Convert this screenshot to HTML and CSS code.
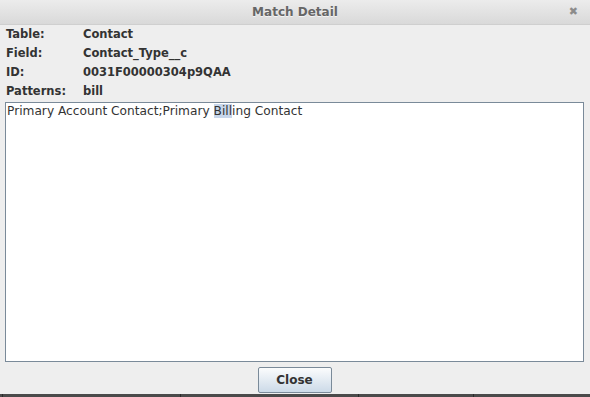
FILE: index.html
```html
<!DOCTYPE html>
<html lang="en">
<head>
  <meta charset="UTF-8" />
  <title>Match Detail</title>
  <link rel="stylesheet" href="styles.css">
</head>
<body>

  <div class="window">
    <div class="titlebar">
      <span class="title">Match Detail</span>
      <span class="close-x">&#x2716;</span>
    </div>

    <div class="fields">
      <div class="row"><span class="label">Table:</span><span class="value">Contact</span></div>
      <div class="row"><span class="label">Field:</span><span class="value">Contact_Type__c</span></div>
      <div class="row"><span class="label">ID:</span><span class="value">0031F00000304p9QAA</span></div>
      <div class="row"><span class="label">Patterns:</span><span class="value">bill</span></div>
    </div>

    <div class="textbox">Primary Account Contact;Primary <span class="hit">Bill</span>ing Contact</div>

    <div class="buttons">
      <button class="btn">Close</button>
    </div>
  </div>

  <div class="taskbar">
    <span class="seg seg1"></span>
    <span class="seg seg2"></span>
    <span class="seg seg3"></span>
    <span class="seg seg4"></span>
  </div>

</body>
</html>
```

FILE: styles.css
```css
body {
  margin: 0;
  width: 590px;
  height: 397px;
  overflow: hidden;
  background: #eeeeee;
  font-family: 'DejaVu Sans', sans-serif;
  font-size: 12px;
  color: #333;
}

.window {
  height: 394px;
  display: flex;
  flex-direction: column;
}

.titlebar {
  height: 24px;
  border-bottom: 1px solid #cfcfcf;
  background: linear-gradient(to bottom, #ececec, #d9d9d9);
  display: flex;
  align-items: center;
  justify-content: center;
  position: relative;
}

.title {
  font-weight: bold;
  color: #666;
  text-shadow: 0 1px 0 #f4f4f4;
}

.close-x {
  position: absolute;
  right: 12px;
  top: 5px;
  font-size: 11px;
  color: #8c8c8c;
}

.fields {
  padding: 0 6px;
}

.row {
  height: 19px;
  line-height: 19px;
  font-weight: bold;
  font-size: 11.5px;
  display: flex;
}

.label {
  width: 77px;
}

.textbox {
  margin: 1px 6px 0 5px;
  border: 1px solid #7a8a99;
  background: #fff;
  padding: 1px;
  font-size: 12.2px;
  line-height: 14px;
  height: 256px;
}

.hit {
  background: #c7d6ea;
}

.buttons {
  display: flex;
  justify-content: center;
  padding-top: 5px;
}

.btn {
  width: 74px;
  height: 26px;
  margin-left: -1px;
  border: 1px solid #7a8a99;
  border-radius: 2px;
  background: linear-gradient(to bottom, #fbfcfd, #ccdae8);
  font-family: 'DejaVu Sans', sans-serif;
  font-size: 12px;
  font-weight: bold;
  color: #333;
  padding: 0;
}

.taskbar {
  height: 3px;
  background: #4a4a4a;
  display: flex;
}

.seg {
  border-left: 1px solid #2a2a2a;
}

.seg1 { margin-left: 2px; width: 177px; }
.seg2 { width: 177px; }
.seg3 { width: 114px; }
.seg4 { width: 100px; }
```
